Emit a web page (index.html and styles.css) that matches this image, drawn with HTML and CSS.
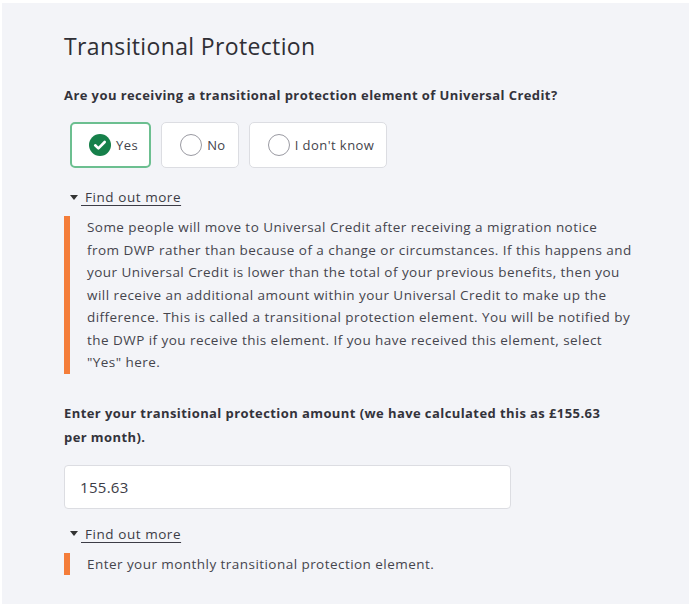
FILE: index.html
```html
<!DOCTYPE html>
<html lang="en">
<head>
<meta charset="utf-8">
<title>Transitional Protection</title>
<link rel="stylesheet" href="styles.css">
</head>
<body>
<main class="panel">
  <h1 class="title">Transitional Protection</h1>
  <div class="question" role="radiogroup" aria-labelledby="q1">
    <div class="label label-question" id="q1">Are you receiving a transitional protection element of Universal Credit?</div>
    <div class="options">
      <label class="option selected">
        <span class="radio checked">
          <svg viewBox="0 0 22 22" width="22" height="22"><circle cx="11" cy="11" r="11" fill="#16804a"/><path d="M6.2 11.3l3.2 3.1 6.3-6.4" fill="none" stroke="#fff" stroke-width="2.6" stroke-linecap="round" stroke-linejoin="round"/></svg>
        </span>
        <span>Yes</span>
      </label>
      <label class="option">
        <span class="radio"></span>
        <span>No</span>
      </label>
      <label class="option">
        <span class="radio"></span>
        <span>I don't know</span>
      </label>
    </div>
    <div class="more">
      <div class="more-toggle"><span class="caret"></span><a href="#" class="more-link">&nbsp;Find out more</a></div>
      <div class="more-body">Some people will move to Universal Credit after receiving a migration notice from DWP rather than because of a change or circumstances. If this happens and your Universal Credit is lower than the total of your previous benefits, then you will receive an additional amount within your Universal Credit to make up the difference. This is called a transitional protection element. You will be notified by the DWP if you receive this element. If you have received this element, select "Yes" here.</div>
    </div>
  </div>
  <div class="question question-amount">
    <label class="label label-amount" for="amount">Enter your transitional protection amount (we have calculated this as £155.63 per month).</label>
    <input id="amount" class="input" type="text" value="155.63">
    <div class="more">
      <div class="more-toggle"><span class="caret"></span><a href="#" class="more-link">&nbsp;Find out more</a></div>
      <div class="more-body">Enter your monthly transitional protection element.</div>
    </div>
  </div>
</main>
</body>
</html>
```

FILE: styles.css
```css
html, body {
  margin: 0;
  padding: 0;
  background: #ffffff;
}
body {
  font-family: "Open Sans", "Noto Sans", sans-serif;
  color: #3c3c46;
  padding: 3px 4px 5px 2px;
}
.panel {
  background: #f3f4f8;
  height: 601px;
  box-sizing: border-box;
  padding: 28px 20px 0 62px;
}
.title {
  margin: 0;
  font-size: 23px;
  font-weight: 400;
  letter-spacing: 0.35px;
  color: #2f2f35;
  line-height: 30px;
}
.label {
  display: block;
  padding: 0;
  font-size: 13px;
  font-weight: 700;
  letter-spacing: 0.42px;
  color: #33333b;
  line-height: 24px;
}
.label-question {
  margin-top: 22px;
}
.options {
  display: flex;
  gap: 10px;
  margin-top: 15px;
  margin-left: 6px;
}
.option {
  display: flex;
  align-items: center;
  gap: 5px;
  height: 46px;
  box-sizing: border-box;
  padding: 0 12px 0 18px;
  background: #fff;
  border: 1px solid #dcdde2;
  border-radius: 5px;
  font-size: 13px;
  letter-spacing: 0.45px;
  color: #44444c;
}
.option.selected {
  border: 2px solid #6cbf90;
  padding-left: 17px;
  padding-right: 11px;
}
.radio {
  width: 20px;
  height: 20px;
  border: 1px solid #9a9aa2;
  border-radius: 50%;
  background: #fff;
  display: block;
}
.radio.checked {
  width: 22px;
  height: 22px;
  border: 0;
}
.radio svg { display: block; }
.more {
  margin-top: 20px;
}
.more-toggle {
  display: flex;
  align-items: center;
  margin-left: 6px;
  font-size: 13.5px;
  letter-spacing: 0.55px;
  line-height: 18px;
}
.caret {
  width: 0;
  height: 0;
  border-left: 4px solid transparent;
  border-right: 4px solid transparent;
  border-top: 5px solid #333;
  margin-right: 3px;
}
.more-link {
  color: #3c3c46;
  text-decoration: underline;
  text-underline-offset: 3px;
}
.more-body {
  margin-top: 10px;
  border-left: 6px solid #f47d3a;
  padding: 0 0 0 17px;
  font-size: 13.5px;
  letter-spacing: 0.45px;
  line-height: 22.5px;
  color: #45454d;
  max-width: 545px;
}
.label-amount {
  margin-top: 27px;
  max-width: 560px;
}
.input {
  display: block;
  margin-top: 16px;
  width: 447px;
  height: 44px;
  box-sizing: border-box;
  border: 1px solid #dcdde2;
  border-radius: 4px;
  background: #fff;
  padding: 0 15px;
  font-family: inherit;
  font-size: 15px;
  letter-spacing: 0.3px;
  color: #3c3c46;
}
.question-amount .more {
  margin-top: 16px;
}
```
